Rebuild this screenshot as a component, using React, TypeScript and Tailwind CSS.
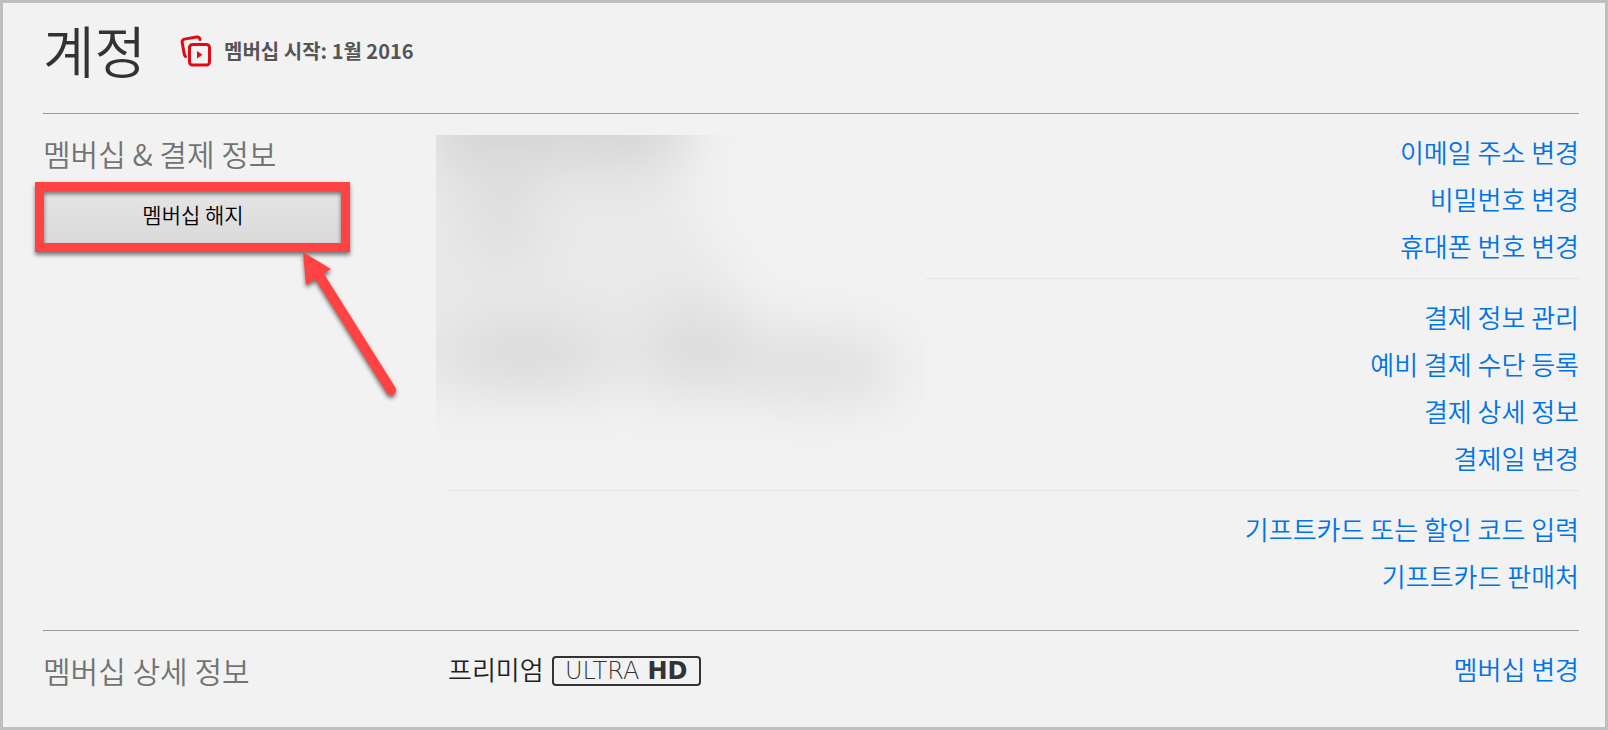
import React from "react";

const linkGroups = [
  ["이메일 주소 변경", "비밀번호 변경", "휴대폰 번호 변경"],
  ["결제 정보 관리", "예비 결제 수단 등록", "결제 상세 정보", "결제일 변경"],
  ["기프트카드 또는 할인 코드 입력", "기프트카드 판매처"],
];

function AccountLink({ children }: { children: React.ReactNode }) {
  return (
    <a href="#" className="text-[26px] leading-[47px] text-[#0073e6] hover:underline">
      {children}
    </a>
  );
}

function SectionTitle({ children }: { children: React.ReactNode }) {
  return <h2 className="text-[30px] leading-[50px] text-[#737373]">{children}</h2>;
}

function MemberIcon() {
  return (
    <svg width="32" height="32" viewBox="0 0 32 32" fill="none" stroke="#e50914" strokeWidth="3" strokeLinecap="round" aria-hidden="true">
      <path d="M5.5 21.5C4.6 20.6 4.3 19.800 4.100 18.500L2.200 7.500C1.900 5.600 2.700 4.500 4.500 4.100L16.500 2.100C18.500 1.800 19.600 2.600 20 4.500" />
      <rect x="9.500" y="9.500" width="20" height="20.500" rx="3" />
      <path d="M17 16L22.500 19.700L17 23.400Z" fill="#e50914" stroke="none" />
    </svg>
  );
}

function UltraHdBadge() {
  return (
    <span className="mt-1 flex h-[30px] w-[149px] items-center justify-center gap-2 rounded-[4px] border-2 border-[#333] font-['DejaVu_Sans',sans-serif] text-[24px] leading-none text-[#333]">
      <span className="font-extralight">ULTRA</span>
      <span className="font-bold">HD</span>
    </span>
  );
}

// Hides the personal details behind a soft grey smear
function RedactedDetails() {
  return (
    <div className="absolute -left-3 top-[21px] h-[323px] w-[490px] overflow-hidden bg-[#f2f2f2]" aria-hidden="true">
      <svg className="size-full" viewBox="0 0 490 323">
        <defs>
          <filter id="smear" x="-50%" y="-50%" width="200%" height="200%">
            <feGaussianBlur stdDeviation="28" />
          </filter>
        </defs>
        <g filter="url(#smear)">
          <path d="M-10 -60H250V28L180 40H-10Z" fill="#d5d5d5" />
          <path d="M-60 30H230L270 100L320 180L460 200V266H-60Z" fill="#e9e9e9" />
          <ellipse cx="65" cy="80" rx="38" ry="55" fill="#dedede" />
          <ellipse cx="90" cy="220" rx="85" ry="34" fill="#dadada" />
          <ellipse cx="260" cy="214" rx="50" ry="40" fill="#dadada" />
          <ellipse cx="380" cy="236" rx="85" ry="32" fill="#dfdfdf" />
        </g>
      </svg>
    </div>
  );
}

function ArrowMark() {
  return (
    <svg
      className="absolute left-[257px] top-[62px] overflow-visible drop-shadow-[0_3px_2px_rgba(0,0,0,0.55)]"
      width="100"
      height="150"
      viewBox="0 0 100 150"
      aria-hidden="true"
    >
      <path d="M3 4L31 21L6 37Z" fill="#ff4343" />
      <path d="M20 29L91 142" stroke="#ff4343" strokeWidth="10" strokeLinecap="round" />
    </svg>
  );
}

export default function App() {
  return (
    <div className="min-h-screen border-[3px] border-[#bfbfbf] bg-[#f2f2f2] pl-10 pr-[26px] font-['Noto_Sans_CJK_KR',sans-serif] font-[350]">
      <header className="flex items-center border-b border-[#999] pb-5 pt-1.5">
        <h1 className="pb-1 text-[56px] leading-[80px] text-[#333]">계정</h1>
        <div className="ml-[34px] flex items-center gap-3">
          <MemberIcon />
          <span className="text-[20px] font-bold text-[#555]">멤버십 시작: 1월 2016</span>
        </div>
      </header>

      <main>
        <section className="flex border-b border-[#999]">
          <div className="w-[405px] shrink-0 pt-3.5">
            <SectionTitle>멤버십 &amp; 결제 정보</SectionTitle>
            <div className="relative mt-2 w-[300px]">
              <button
                type="button"
                className="h-[58px] w-full bg-linear-to-b from-[#e6e6e6] to-[#dadada] text-[21px] text-black"
              >
                멤버십 해지
              </button>
              <div className="pointer-events-none absolute -left-2 -top-1 h-[70px] w-[315px] border-[9px] border-[#ff4343] shadow-[0_3px_4px_rgba(0,0,0,0.5),inset_0_3px_4px_rgba(0,0,0,0.5)]" />
              <ArrowMark />
            </div>
          </div>

          <div className="relative flex-1 pb-[22px]">
            {linkGroups.map((group) => (
              <ul
                key={group[0]}
                className="flex flex-col items-end border-b border-[#e5e5e5] pb-[9px] pt-3.5 last-of-type:border-b-0"
              >
                {group.map((label) => (
                  <li key={label} className="flex">
                    <AccountLink>{label}</AccountLink>
                  </li>
                ))}
              </ul>
            ))}
            <RedactedDetails />
          </div>
        </section>

        <section className="flex pt-3.5">
          <div className="w-[405px] shrink-0">
            <SectionTitle>멤버십 상세 정보</SectionTitle>
          </div>
          <div className="flex flex-1 items-start justify-between">
            <div className="flex items-center gap-2">
              <span className="text-[26px] leading-[47px] text-[#221f1f]">프리미엄</span>
              <UltraHdBadge />
            </div>
            <AccountLink>멤버십 변경</AccountLink>
          </div>
        </section>
      </main>
    </div>
  );
}
